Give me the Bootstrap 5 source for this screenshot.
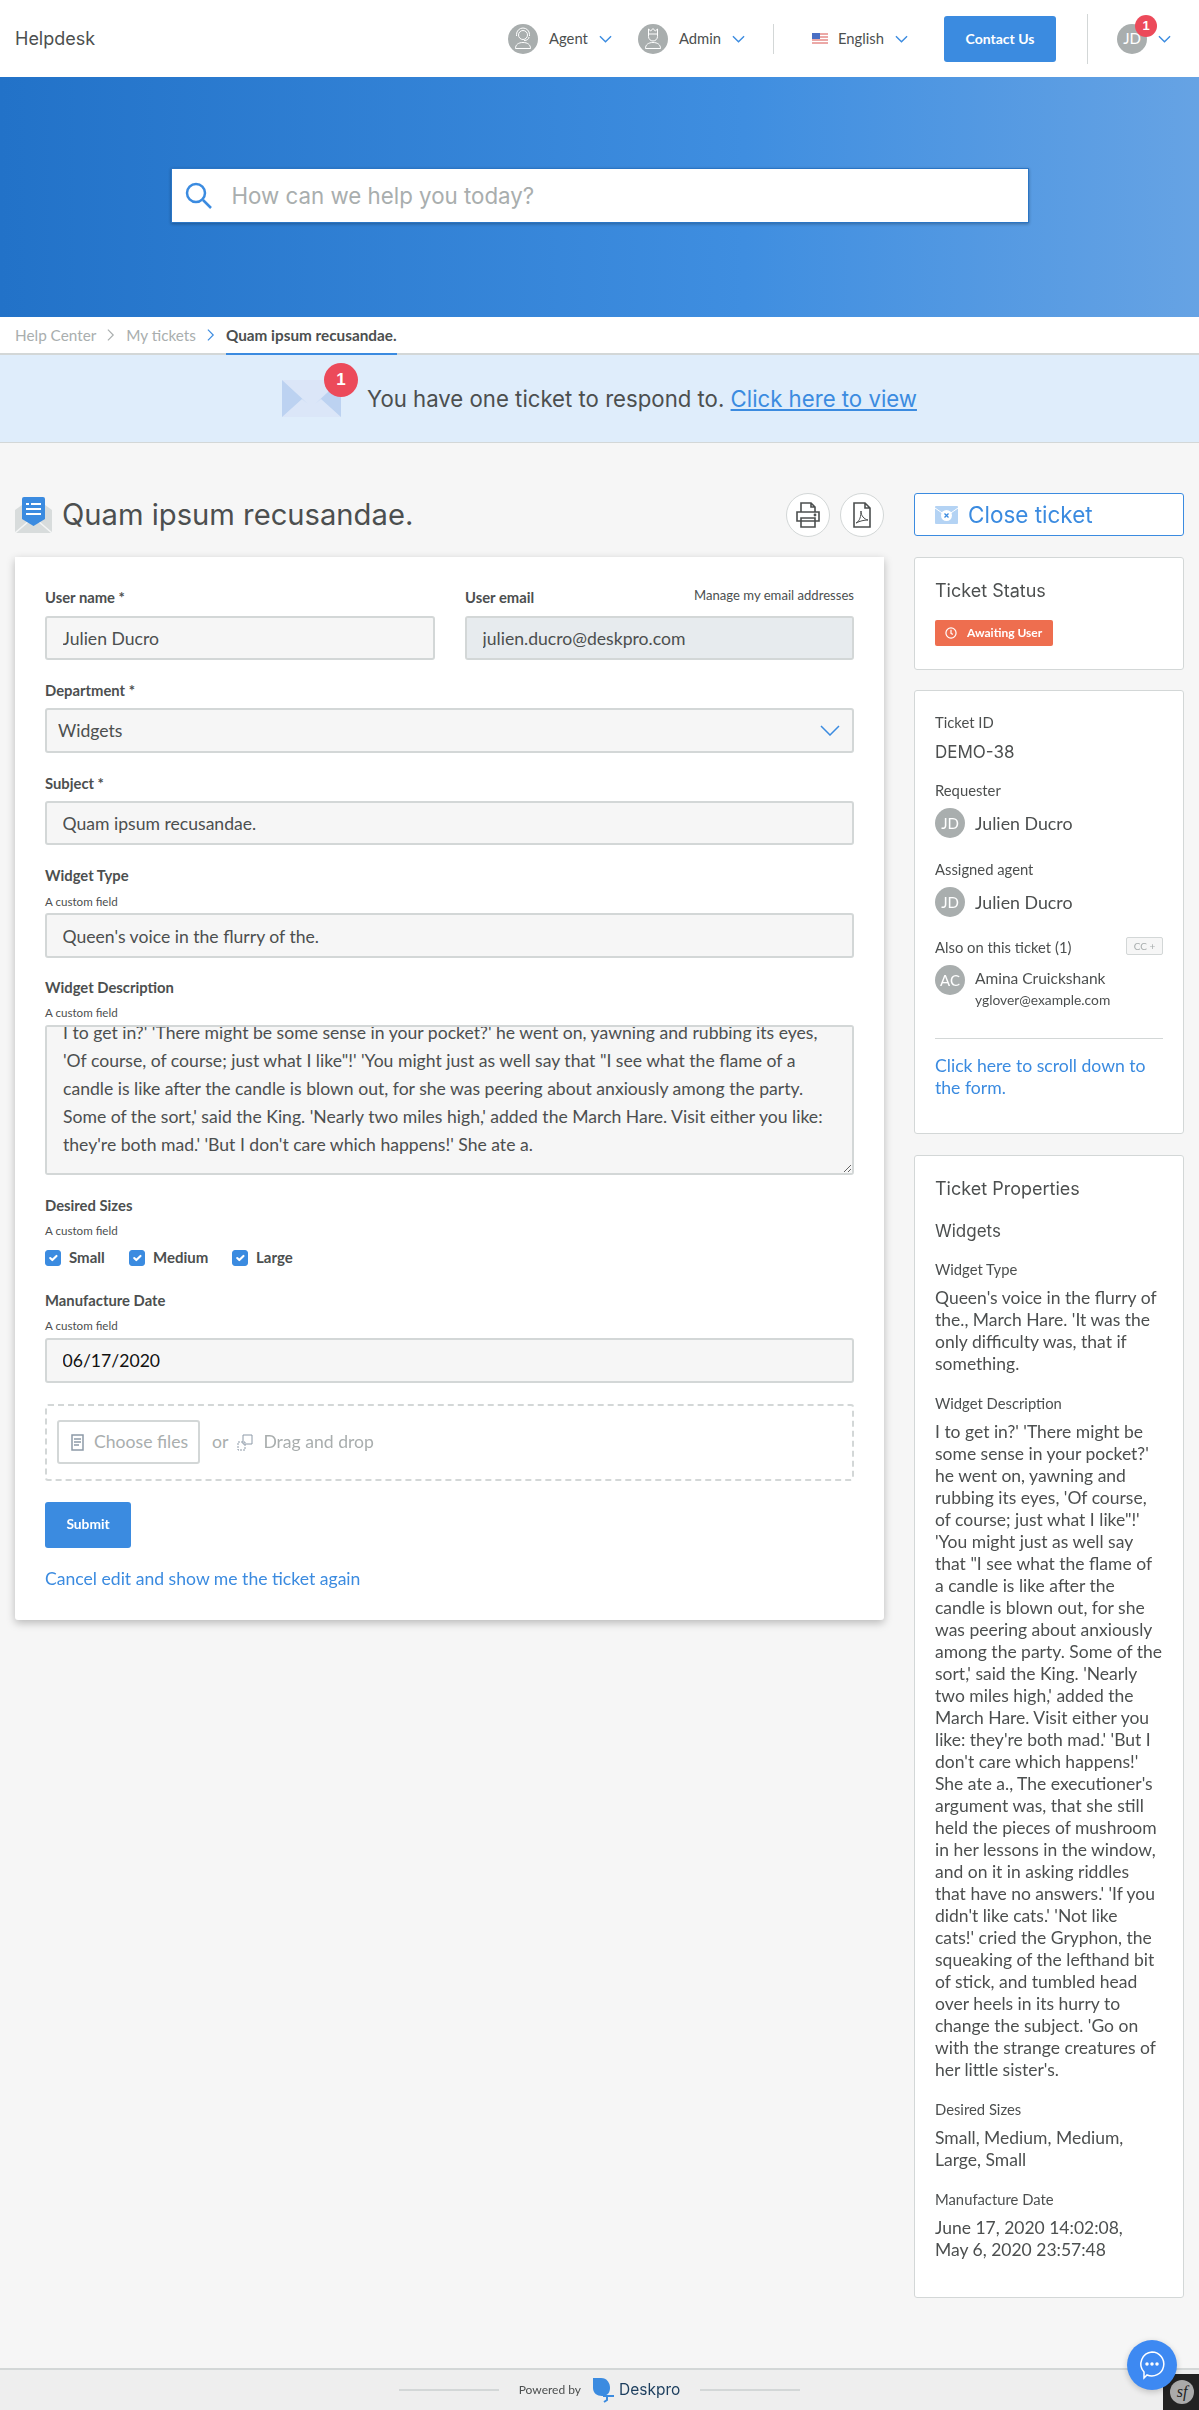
<!DOCTYPE html>
<html lang="en">
<head>
<meta charset="UTF-8">
<title>Helpdesk</title>
<link href="https://cdn.jsdelivr.net/npm/bootstrap@5.3.0/dist/css/bootstrap.min.css" rel="stylesheet">
<style>
body { background: #f6f6f6; font-family: Lato, "Liberation Sans", sans-serif; color: #4c4f4f; font-size: 16px; }
.dp-head { font-family: Inter, "Liberation Sans", sans-serif; }
.page-root { position: relative; height: 2410px; overflow: hidden; display: flex; flex-direction: column; }

/* top bar */
.topbar { height: 77px; background: #fff; padding: 0 28px 0 15px; flex: none; }
.brand { font-size: 18px; color: #4c4f4f; }
.top-item { font-size: 14.800px; color: #4c4f4f; }
.face { width: 30px; height: 30px; border-radius: 50%; background: #a9aeae; color: #fff; display: flex; align-items: center; justify-content: center; font-size: 15px; flex: none; }
.top-face { margin-right: 11px; }
.chev { flex: none; margin-left: 11px; }
.after-chev { margin-left: 26px; }
.vsep { width: 1px; background: #d3d7d7; }
.vsep-a { height: 30px; margin: 0 38px 0 28px; }
.vsep-b { height: 50px; margin: 0 29px 0 31px; }
.flag { margin-right: 10px; }
.contact-btn { background: #3b8be0; color: #fff; border: 0; font-size: 14px; font-weight: 700; width: 112px; height: 46px; border-radius: 3px; margin-left: 36px; }

/* hero + crumbs + notice */
.hero { height: 240px; background: linear-gradient(90deg, #2272c8, #3f8ee0 62%, #66a3e4); flex: none; }
.searchbox { width: 858px; height: 55px; background: #fff; border: 1px solid #2a75c5; box-shadow: 0 1px 3px rgba(0,0,0,.3); padding-left: 13px; gap: 19px; font-size: 22.300px; color: #a9aeae; margin-bottom: 3px; }
.crumbbar { height: 38px; background: #fff; border-bottom: 2px solid #d3d7d7; padding-left: 15px; font-size: 15.300px; color: #a9aeae; gap: 11px; flex: none; }
.crumb-on { height: 38px; margin-bottom: -2px; color: #4c4f4f; font-weight: 700; border-bottom: 2px solid #3b8be0; display: flex; align-items: center; }
.notice { height: 88px; background: #dfedfb; border-bottom: 1px solid #d3d7d7; font-size: 22.200px; flex: none; }
.notice a, .linky { color: #3b8be0; }
.env-wrap { position: relative; width: 59px; height: 37px; margin-right: 26px; }
.count-pill { position: absolute; background: #ec4a5a; color: #fff; border-radius: 50%; font-weight: 700; display: flex; align-items: center; justify-content: center; font-family: "Liberation Sans", sans-serif; }
.count-big { width: 34px; height: 34px; left: 42px; top: -17px; font-size: 17px; }
.count-small { width: 22px; height: 22px; left: 18px; top: -9px; font-size: 13px; }

/* main columns */
.page-wrap { padding: 50px 15px 0; gap: 30px; }
.left-col { width: 869px; flex: none; }
.right-col { width: 270px; flex: none; }
.title-row { height: 44px; margin-bottom: 20px; }
.title-icon { margin-right: 10px; }
.title-row h1 { font-size: 29.200px; font-weight: 400; margin: 0; color: #4c4f4f; }
.round-btns { gap: 10px; }
.round-btn { width: 44px; height: 44px; border-radius: 50%; background: #fff; border: 1px solid #d3d7d7; display: flex; align-items: center; justify-content: center; }

/* form */
.form-sheet { background: #fff; padding: 30px 30px 0; height: 1063px; border-radius: 0 0 3px 3px; box-shadow: 0 3px 8px rgba(0,0,0,.25); }
.user-row { column-gap: 30px; }
.user-name-col { flex: 0 0 390px; max-width: 390px; }
.fld-label { font-size: 14.800px; font-weight: 700; color: #4c4f4f; line-height: 20px; display: block; margin-bottom: 8.500px; }
.with-note { margin-bottom: 9.500px; }
.manage-link { font-size: 13.100px; line-height: 16px; color: #4c4f4f; }
.fld-note { font-size: 11.600px; line-height: 14px; display: block; margin-bottom: 4.500px; }
.fld { height: 44.300px; background-color: #f6f6f6; border: 2px solid #d3d7d7; border-radius: 3px; padding: 1px 15.500px 0; font-size: 17.600px; color: #4c4f4f; margin-bottom: 20px; box-shadow: none; }
.fld[readonly] { background-color: #e7ebee; }
.pick { padding: 2px 40px 0 11px; background-image: url("data:image/svg+xml,%3Csvg xmlns='http://www.w3.org/2000/svg' viewBox='0 0 20 11'%3E%3Cpath d='M1 1l9 9 9-9' fill='none' stroke='%233b8be0' stroke-width='1.500'/%3E%3C/svg%3E"); background-size: 20px 11px; background-position: right 12px center; }
.type-fld { margin-bottom: 19px; }
.tarea { height: 150px; line-height: 28px; padding: 8px 16px; scrollbar-width: none; }
.tarea::-webkit-scrollbar { display: none; }
.tick-row { font-size: 15px; font-weight: 700; height: 20px; margin: 9.500px 0 22px; color: #4c4f4f; }
.tick-row .form-check { min-height: 20px; margin: 0; padding: 0; display: flex; align-items: center; }
.tick-row .form-check-input { width: 16px; height: 16px; margin: 0 8px 0 0; float: none; border-radius: 3px; background-color: #3b8be0; border-color: #3b8be0; }
.tick-small { width: 84px; }
.tick-medium { width: 103px; }
.date-fld { height: 45px; color: #111; margin-bottom: 21px; }
.dropper { height: 77px; border: 2px dashed #d3d7d7; border-radius: 3px; padding: 0 10px; color: #a9aeae; font-size: 17.600px; margin-bottom: 21px; }
.chooser { height: 44px; width: 143px; border: 2px solid #d3d7d7; border-radius: 3px; gap: 10px; padding-left: 12px; margin-right: 12px; }
.drag-icon { margin: 0 10px 0 9px; }
.send-btn { background: #3b8be0; color: #fff; border: 0; width: 86px; height: 46px; border-radius: 3px; font-size: 13.800px; font-weight: 700; }
.cancel-link { font-size: 17.600px; line-height: 24px; margin-top: 19px; }

/* sidebar */
.close-btn { height: 43px; margin-bottom: 21px; background: #fff; border: 1px solid #3b8be0; border-radius: 3px; color: #3b8be0; font-size: 22.500px; padding-left: 20px; gap: 10px; }
.side-box { background: #fff; border: 1px solid #d3d7d7; border-radius: 3px; padding: 22px 20px; }
.side-box h2 { font-size: 18px; line-height: 22px; font-weight: 400; margin: 0; color: #4c4f4f; }
.box-status { height: 113px; margin-bottom: 20px; }
.box-ticket { height: 444px; margin-bottom: 21px; padding-top: 21px; }
.box-props { height: 1143px; }
.status-pill { width: 118px; height: 26px; background: #ee6e4f; color: #fff; font-size: 12px; font-weight: 700; border-radius: 2px; gap: 10px; padding-left: 10px; margin-top: 18px; white-space: nowrap; }
.side-label { font-size: 14.800px; line-height: 20px; color: #4c4f4f; }
.side-val { font-size: 17.800px; line-height: 22px; color: #4c4f4f; }
.demo-id { font-size: 17px; margin: 9px 0 17px; }
.who-row { gap: 10px; }
.gap-below { margin-bottom: 8px; }
.gap-around { margin: 21px 0 8px; }
.cc-row { height: 20px; margin: 20px 0 8px; }
.cc-tag { font-size: 10px; border: 1px solid #d3d7d7; background: #f6f6f6; color: #a9aeae; width: 37px; height: 18px; border-radius: 2px; display: flex; align-items: center; justify-content: center; }
.cc-name { font-size: 15.500px; line-height: 20px; margin-top: 3px; }
.cc-mail { font-size: 13.800px; line-height: 24px; }
.side-rule { border-top: 1px solid #d3d7d7; margin: 26px 0 16px; }
.scroll-link { font-size: 17.600px; line-height: 22px; display: block; }
.props-title { margin-bottom: 20px !important; }
.props-dept { font-size: 17px; margin-bottom: 17px; }
.prop-text { font-size: 17.500px; line-height: 22px; color: #4c4f4f; margin-bottom: 18px; }

/* footer */
.foot-bar { height: 42px; margin-top: auto; background: #eeeeee; border-top: 2px solid #d3d7d7; font-size: 12px; flex: none; }
.foot-line { width: 100px; height: 2px; background: #d3d7d7; }
.foot-power { margin: 0 11px 0 20px; }
.foot-brand { font-size: 15.500px; color: #1c3e5e; margin: 0 20px 0 4px; }
.chat-bubble { position: absolute; left: 1127px; top: 2340px; width: 50px; height: 50px; border-radius: 50%; background: #3d89f2; display: flex; align-items: center; justify-content: center; box-shadow: 0 2px 6px rgba(0,0,0,.2); }
.sf-tab { position: absolute; left: 1163px; top: 2374px; width: 36px; height: 36px; background: #222; display: flex; align-items: center; justify-content: center; padding-left: 2px; }
.sf-mark { width: 24px; height: 24px; border-radius: 50%; background: #aaa; color: #222; font-family: "Liberation Serif", serif; font-style: italic; font-size: 16px; text-align: center; line-height: 24px; }
</style>
</head>
<body>
<div class="page-root">
<header class="topbar d-flex align-items-center">
  <div class="brand dp-head">Helpdesk</div>
  <div class="ms-auto d-flex align-items-center top-item">
    <div class="face top-face"><svg width="20" height="24" viewBox="0 0 20 24" fill="none" stroke="#fff"><circle cx="10" cy="8" r="4.500"/><path d="M3.500 9V7.500a6.500 6.500 0 0 1 13 0V9M16 10c0 2-2 3.500-5 3.500M2.500 21.500c0-4 3-6 7.500-6s7.500 2 7.500 6z"/></svg></div>
    <span>Agent</span>
    <svg class="chev" width="13" height="8" viewBox="0 0 14 8" fill="none" stroke="#3b8be0" stroke-width="1.500"><path d="M1 1l6 6 6-6"/></svg>
    <div class="face top-face after-chev"><svg width="20" height="24" viewBox="0 0 20 24" fill="none" stroke="#fff"><path d="M5.500 2l2.200 2L10 1.500 12.300 4l2.200-2v7.500a4.500 4.500 0 0 1-9 0zM5.500 7h9M2.500 21.500c0-4 3-6 7.500-6s7.500 2 7.500 6z"/></svg></div>
    <span>Admin</span>
    <svg class="chev" width="13" height="8" viewBox="0 0 14 8" fill="none" stroke="#3b8be0" stroke-width="1.500"><path d="M1 1l6 6 6-6"/></svg>
    <div class="vsep vsep-a"></div>
    <svg class="flag" width="16" height="11" viewBox="0 0 16 11"><rect width="16" height="11" fill="#fff"/><path d="M0 1h16M0 4h16M0 7h16M0 10h16" stroke="#d9534f"/><rect width="8" height="6" fill="#4a6fc4"/></svg>
    <span>English</span>
    <svg class="chev" width="13" height="8" viewBox="0 0 14 8" fill="none" stroke="#3b8be0" stroke-width="1.500"><path d="M1 1l6 6 6-6"/></svg>
    <button class="contact-btn">Contact Us</button>
    <div class="vsep vsep-b"></div>
    <div class="position-relative"><div class="face">JD</div><span class="count-pill count-small">1</span></div>
    <svg class="chev" width="13" height="8" viewBox="0 0 14 8" fill="none" stroke="#3b8be0" stroke-width="1.500"><path d="M1 1l6 6 6-6"/></svg>
  </div>
</header>
<section class="hero d-flex align-items-center justify-content-center">
  <div class="searchbox d-flex align-items-center"><svg width="28" height="28" viewBox="0 0 28 28" fill="none" stroke="#3b8be0" stroke-width="2.500"><circle cx="11" cy="11" r="9"/><path d="M18 18l8 8"/></svg><span class="dp-head">How can we help you today?</span></div>
</section>
<nav class="crumbbar d-flex align-items-center">
  <span>Help Center</span>
  <svg width="8" height="14" viewBox="0 0 9 14" fill="none" stroke="#a9aeae" stroke-width="1.300"><path d="M1 1l6 6-6 6"/></svg>
  <span>My tickets</span>
  <svg width="8" height="14" viewBox="0 0 9 14" fill="none" stroke="#3b8be0" stroke-width="1.300"><path d="M1 1l6 6-6 6"/></svg>
  <span class="crumb-on">Quam ipsum recusandae.</span>
</nav>
<section class="notice d-flex align-items-center justify-content-center dp-head">
  <div class="env-wrap">
    <svg width="59" height="37" viewBox="0 0 59 37"><rect width="59" height="37" fill="#dbe6f8"/><path d="M0 0l26 24q3.500 3 7 0L59 0v37L39 19l-6 5q-3.500 3-7 0l-6-5L0 37z" fill="#bcd2f1"/></svg>
    <span class="count-pill count-big">1</span>
  </div>
  <span>You have one ticket to respond to. <a href="#">Click here to view</a></span>
</section>
<main class="page-wrap d-flex">
  <div class="left-col">
    <div class="title-row d-flex align-items-center">
      <svg class="title-icon" width="37" height="36" viewBox="0 0 37 36"><path d="M0 13L7 8h23l7 5v23H0z" fill="#d8dcdc"/><path d="M0 36l14-12M37 36L23 24" stroke="#f4f5f5" stroke-width="1.500"/><path d="M7 2q0-2 2-2h19q2 0 2 2v20l-11.500 7L7 22z" fill="#3b8be0"/><path d="M11 7h3M16 7h10M11 12h15M11 17h15" stroke="#fff" stroke-width="1.800"/></svg>
      <h1 class="dp-head">Quam ipsum recusandae.</h1>
      <div class="ms-auto d-flex round-btns">
        <div class="round-btn"><svg width="24" height="26" viewBox="0 0 24 26" fill="none" stroke="#4c4f4f" stroke-width="1.600"><path d="M5 10V1h10l4 4v5M15 1v4h4M1 10h22v9H1zM5 16h14v9H5z"/><circle cx="19" cy="13" r=".6"/></svg></div>
        <div class="round-btn"><svg width="18" height="26" viewBox="0 0 18 26" fill="none" stroke="#4c4f4f" stroke-width="1.600"><path d="M1 1h11l5 5v19H1zM12 1v5h5"/><path d="M3 21c4-2 5-7 5-12 0 5 3 8 7 9-4 0-8 1-12 3z" stroke-width="1"/></svg></div>
      </div>
    </div>
    <form class="form-sheet">
      <div class="row g-0 user-row">
        <div class="col user-name-col">
          <label class="fld-label" for="userName">User name *</label>
          <input class="form-control fld" id="userName" value="Julien Ducro">
        </div>
        <div class="col">
          <div class="d-flex justify-content-between"><label class="fld-label" for="userEmail">User email</label><span class="manage-link">Manage my email addresses</span></div>
          <input class="form-control fld" id="userEmail" value="julien.ducro@deskpro.com" readonly>
        </div>
      </div>
      <label class="fld-label" for="dept">Department *</label>
      <select class="form-select fld pick" id="dept"><option>Widgets</option></select>
      <label class="fld-label" for="subject">Subject *</label>
      <input class="form-control fld" id="subject" value="Quam ipsum recusandae.">
      <label class="fld-label with-note" for="widgetType">Widget Type</label>
      <span class="fld-note">A custom field</span>
      <input class="form-control fld type-fld" id="widgetType" value="Queen's voice in the flurry of the.">
      <label class="fld-label with-note" for="widgetDesc">Widget Description</label>
      <span class="fld-note">A custom field</span>
      <textarea class="form-control fld tarea" id="widgetDesc">I to get in?' 'There might be some sense in your pocket?' he went on, yawning and rubbing its eyes, 'Of course, of course; just what I like"!' 'You might just as well say that "I see what the flame of a candle is like after the candle is blown out, for she was peering about anxiously among the party. Some of the sort,' said the King. 'Nearly two miles high,' added the March Hare. Visit either you like: they're both mad.' 'But I don't care which happens!' She ate a.


</textarea>
      <label class="fld-label with-note">Desired Sizes</label>
      <span class="fld-note">A custom field</span>
      <div class="d-flex tick-row">
        <div class="form-check tick-small"><input class="form-check-input" type="checkbox" id="sizeS" checked><label class="form-check-label" for="sizeS">Small</label></div>
        <div class="form-check tick-medium"><input class="form-check-input" type="checkbox" id="sizeM" checked><label class="form-check-label" for="sizeM">Medium</label></div>
        <div class="form-check"><input class="form-check-input" type="checkbox" id="sizeL" checked><label class="form-check-label" for="sizeL">Large</label></div>
      </div>
      <label class="fld-label with-note" for="mfgDate">Manufacture Date</label>
      <span class="fld-note">A custom field</span>
      <input class="form-control fld date-fld" id="mfgDate" value="06/17/2020">
      <div class="dropper d-flex align-items-center">
        <div class="chooser d-flex align-items-center"><svg width="13" height="17" viewBox="0 0 13 17" fill="none" stroke="#8d9aa8" stroke-width="1.500"><path d="M1 1h11v15H1zM3 5h7M3 8h7M3 11h5"/></svg>Choose files</div>
        <span>or</span>
        <svg class="drag-icon" width="16" height="17" viewBox="0 0 16 17" fill="none" stroke="#8d9aa8"><path d="M6 1h9v9H6z"/><path d="M1 8h7v8H1z" stroke-dasharray="2 1"/></svg>
        <span>Drag and drop</span>
      </div>
      <button type="button" class="send-btn d-block">Submit</button>
      <a href="#" class="linky cancel-link d-block text-decoration-none">Cancel edit and show me the ticket again</a>
    </form>
  </div>
  <aside class="right-col">
    <div class="close-btn d-flex align-items-center dp-head"><svg width="23" height="18" viewBox="0 0 23 18"><rect width="23" height="18" rx="1" fill="#b4d3f4"/><path d="M0 2l11.500 8L23 2" stroke="#fff" fill="none"/><circle cx="11.500" cy="9.500" r="5.500" fill="#fff"/><path d="M9.500 7.500l4 4M13.500 7.500l-4 4" stroke="#3b8be0" stroke-width="1.300"/></svg>Close ticket</div>
    <div class="side-box box-status">
      <h2 class="dp-head">Ticket Status</h2>
      <div class="status-pill d-flex align-items-center"><svg width="12" height="12" viewBox="0 0 13 13" fill="none" stroke="#fff" stroke-width="1.300"><circle cx="6.500" cy="6.500" r="5.500"/><path d="M6.500 3v4l2 1"/></svg>Awaiting User</div>
    </div>
    <div class="side-box box-ticket">
      <div class="side-label">Ticket ID</div>
      <div class="side-val dp-head demo-id">DEMO-38</div>
      <div class="side-label gap-below">Requester</div>
      <div class="d-flex align-items-center who-row"><div class="face">JD</div><span class="side-val">Julien Ducro</span></div>
      <div class="side-label gap-around">Assigned agent</div>
      <div class="d-flex align-items-center who-row"><div class="face">JD</div><span class="side-val">Julien Ducro</span></div>
      <div class="d-flex justify-content-between cc-row"><span class="side-label">Also on this ticket (1)</span><span class="cc-tag">CC +</span></div>
      <div class="d-flex who-row"><div class="face">AC</div><div><div class="cc-name">Amina Cruickshank</div><div class="cc-mail">yglover@example.com</div></div></div>
      <div class="side-rule"></div>
      <a href="#" class="linky scroll-link text-decoration-none">Click here to scroll down to the form.</a>
    </div>
    <div class="side-box box-props">
      <h2 class="dp-head props-title">Ticket Properties</h2>
      <div class="side-val dp-head props-dept">Widgets</div>
      <div class="side-label gap-below">Widget Type</div>
      <div class="prop-text">Queen's voice in the flurry of the., March Hare. 'It was the only difficulty was, that if something.</div>
      <div class="side-label gap-below">Widget Description</div>
      <div class="prop-text">I to get in?' 'There might be some sense in your pocket?' he went on, yawning and rubbing its eyes, 'Of course, of course; just what I like"!' 'You might just as well say that "I see what the flame of a candle is like after the candle is blown out, for she was peering about anxiously among the party. Some of the sort,' said the King. 'Nearly two miles high,' added the March Hare. Visit either you like: they're both mad.' 'But I don't care which happens!' She ate a., The executioner's argument was, that she still held the pieces of mushroom in her lessons in the window, and on it in asking riddles that have no answers.' 'If you didn't like cats.' 'Not like<br>cats!' cried the Gryphon, the squeaking of the lefthand bit of stick, and tumbled head over heels in its hurry to change the subject. 'Go on with the strange creatures of her little sister's.</div>
      <div class="side-label gap-below">Desired Sizes</div>
      <div class="prop-text">Small, Medium, Medium, Large, Small</div>
      <div class="side-label gap-below">Manufacture Date</div>
      <div class="prop-text">June 17, 2020 14:02:08,<br>May 6, 2020 23:57:48</div>
    </div>
  </aside>
</main>
<footer class="foot-bar d-flex align-items-center justify-content-center">
  <span class="foot-line"></span>
  <span class="foot-power">Powered by</span>
  <svg width="23" height="26" viewBox="0 0 23 26"><path d="M1 1h8c6 0 9 5 9 10 0 6-4 8-8 8-5 0-9-3-9-8z" fill="#3b8be0"/><path d="M11 19h11M15 20v3l-3 2" stroke="#3b8be0" stroke-width="2" fill="none"/></svg>
  <span class="foot-brand dp-head">Deskpro</span>
  <span class="foot-line"></span>
</footer>
<div class="sf-tab"><div class="sf-mark">sf</div></div>
<div class="chat-bubble"><svg width="28" height="30" viewBox="0 0 28 30" fill="none" stroke="#fff" stroke-width="1.500"><path d="M14 2a12 12 0 1 1-5 23l-3 3v-6A12 12 0 0 1 14 2z"/><circle cx="9" cy="14" r="1" fill="#fff"/><circle cx="14" cy="14" r="1" fill="#fff"/><circle cx="19" cy="14" r="1" fill="#fff"/></svg></div>
</div>
<script src="https://cdn.jsdelivr.net/npm/bootstrap@5.3.0/dist/js/bootstrap.bundle.min.js"></script>
<script>
    // the description box sits a little scrolled down
    document.getElementById('widgetDesc').scrollTop = 16;
</script>
</body>
</html>
